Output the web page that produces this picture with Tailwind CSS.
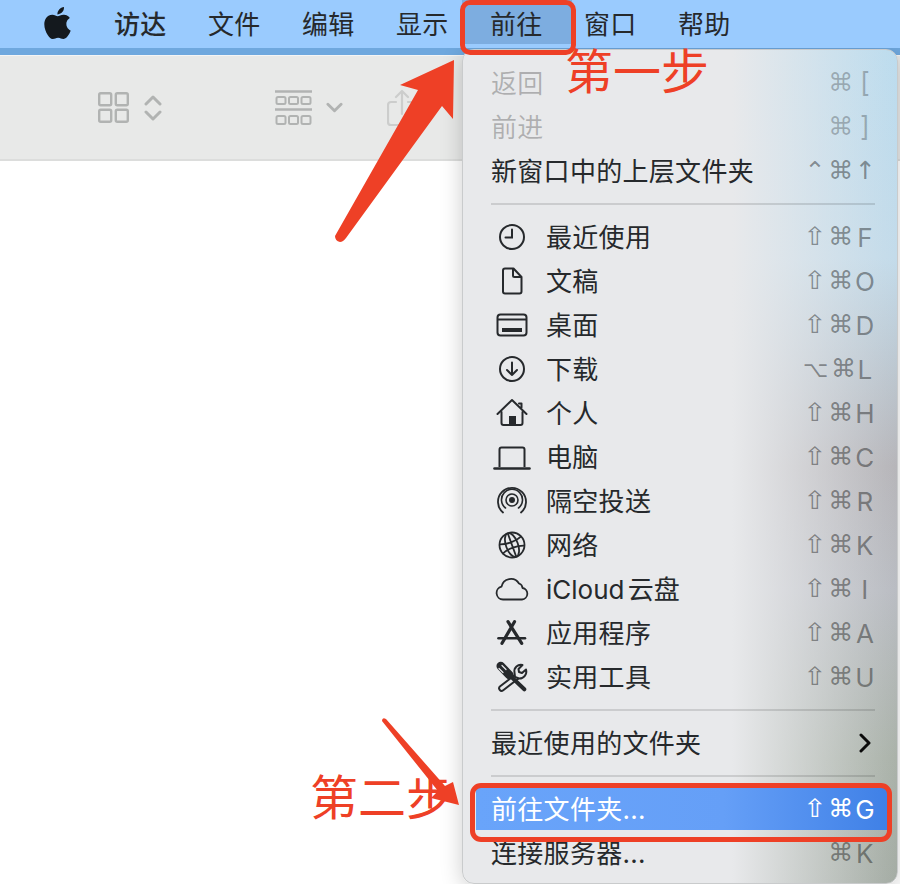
<!DOCTYPE html>
<html lang="zh-CN">
<head>
    <meta charset="UTF-8">
    <meta name="viewport" content="width=device-width, initial-scale=1.0">
    <title>前往文件夹</title>
    <script src="https://cdn.jsdelivr.net/npm/@tailwindcss/browser@4"></script>
</head>
<body class="bg-white">
<div class="relative w-[900px] h-[884px] overflow-hidden bg-white font-['Inter','Noto_Sans_CJK_SC',sans-serif] text-[26px] tracking-[0.3px] text-[#26292c]">

    <!-- 菜单栏 -->
    <header class="relative z-10 h-[48px] bg-[#9acbfe] flex items-center pl-[44px]">
        <svg class="w-[27px] h-[32px] mr-[43px] -mt-[2px] text-[#14191e]" viewBox="2 0 20 24" preserveAspectRatio="none" fill="currentColor"><path d="M12.152 6.896c-.948 0-2.415-1.078-3.96-1.04-2.04.027-3.91 1.183-4.961 3.014-2.117 3.675-.546 9.103 1.519 12.09 1.013 1.454 2.208 3.09 3.792 3.039 1.52-.065 2.09-.987 3.935-.987 1.831 0 2.35.987 3.96.948 1.637-.026 2.676-1.48 3.676-2.948 1.156-1.688 1.636-3.325 1.662-3.415-.039-.013-3.182-1.221-3.22-4.857-.026-3.04 2.48-4.494 2.597-4.559-1.429-2.09-3.623-2.324-4.39-2.376-2-.156-3.675 1.09-4.61 1.09zM15.53 3.83c.843-1.012 1.4-2.427 1.245-3.83-1.207.052-2.662.805-3.532 1.818-.78.896-1.454 2.338-1.273 3.714 1.338.104 2.715-.688 3.559-1.701"/></svg>
        <span class="w-[94px] font-medium">访达</span>
        <span class="w-[94px]">文件</span>
        <span class="w-[94px]">编辑</span>
        <span class="w-[94px]">显示</span>
        <span class="relative w-[94px]">
            <span class="absolute -left-[28px] top-[-9px] w-[110px] h-[48px] bg-[#7dade0]"></span>
            <span class="relative">前往</span>
        </span>
        <span class="w-[94px]">窗口</span>
        <span class="w-[94px]">帮助</span>
    </header>
    <div class="h-[7px] bg-[#6fa8de]"></div>
    <div class="h-[1px] bg-[#f4f5f5]"></div>

    <!-- 工具栏 -->
    <div class="h-[105px] bg-[#e8e9e8] border-b-2 border-[#dcdddc] flex items-center pl-[98px] text-[#b1b3b2]">
        <svg class="w-[31px] h-[31px] mr-[15px]" viewBox="0 0 31 31" fill="none" stroke="currentColor" stroke-width="2.4">
            <rect x="1.2" y="1.2" width="12" height="12" rx="1.5"/><rect x="17.8" y="1.2" width="12" height="12" rx="1.5"/>
            <rect x="1.2" y="17.8" width="12" height="12" rx="1.5"/><rect x="17.8" y="17.8" width="12" height="12" rx="1.5"/>
        </svg>
        <svg class="w-[18px] h-[28px] mr-[113px]" viewBox="0 0 18 28" fill="none" stroke="currentColor" stroke-width="3" stroke-linecap="round" stroke-linejoin="round">
            <path d="M2 10l7-7 7 7M2 18l7 7 7-7"/>
        </svg>
        <svg class="w-[37px] h-[36px] mr-[14px]" viewBox="0 0 37 36" fill="none" stroke="currentColor" stroke-width="2">
            <path d="M0 1.5h37M0 19.5h37" stroke-width="2.4"/>
            <rect x="1.5" y="7" width="9" height="7" rx="1.5"/><rect x="14" y="7" width="9" height="7" rx="1.5"/><rect x="26.500" y="7" width="9" height="7" rx="1.5"/>
            <rect x="1.5" y="26" width="9" height="8" rx="1.5"/><rect x="14" y="26" width="9" height="8" rx="1.5"/><rect x="26.500" y="26" width="9" height="8" rx="1.5"/>
        </svg>
        <svg class="w-[17px] h-[12px] mr-[44px]" viewBox="0 0 18 12" fill="none" stroke="currentColor" stroke-width="3" stroke-linecap="round" stroke-linejoin="round">
            <path d="M2 2l7 7 7-7"/>
        </svg>
        <svg class="w-[30px] h-[38px] opacity-50" viewBox="0 0 30 38" fill="none" stroke="currentColor" stroke-width="2.2" stroke-linecap="round" stroke-linejoin="round">
            <path d="M9 13H4a3 3 0 0 0-3 3v17a3 3 0 0 0 3 3h22a3 3 0 0 0 3-3V16a3 3 0 0 0-3-3h-5M15 25V2M9 8l6-6 6 6"/>
        </svg>
    </div>

    <!-- 下拉菜单 -->
    <div class="absolute left-[462px] top-[49px] w-[436px] h-[835px] pt-[11px] pl-[28px] pr-[22px] rounded-[12px] border border-[#c9cbcc] bg-[linear-gradient(90deg,#e8e9eb_62%,rgba(232,233,235,0)_100%),linear-gradient(180deg,#bcdcee_0%,#c3dbea_25%,#b6b5b9_50%,#b9bcc2_65%,#aab2a9_85%,#a4aca4_100%)] shadow-[0_4px_22px_rgba(0,0,0,0.2)]">
        <div class="h-[44px] flex items-center justify-between text-black/25">
            <span>返回</span>
            <span class="flex items-center font-['DejaVu_Sans'] text-[25px]"><span class="w-[28px] text-center">⌘</span><span class="w-[20px] text-center font-['Inter'] text-[27px]">[</span></span>
        </div>
        <div class="h-[44px] flex items-center justify-between text-black/25">
            <span>前进</span>
            <span class="flex items-center font-['DejaVu_Sans'] text-[25px]"><span class="w-[28px] text-center">⌘</span><span class="w-[20px] text-center font-['Inter'] text-[27px]">]</span></span>
        </div>
        <div class="h-[44px] flex items-center justify-between">
            <span>新窗口中的上层文件夹</span>
            <span class="flex items-center font-['DejaVu_Sans'] text-[25px] text-black/40"><span class="w-[24px] text-center">⌃</span><span class="w-[28px] text-center">⌘</span><span class="w-[20px] text-center">↑</span></span>
        </div>
        <div class="h-[22px] flex items-center"><div class="w-full h-[2px] bg-black/12"></div></div>

        <div class="h-[44px] flex items-center">
            <svg class="w-[42px] h-[32px] mr-[13px]" viewBox="0 0 42 32" fill="none" stroke="#26292c" stroke-width="2" stroke-linecap="round"><circle cx="21" cy="16" r="12"/><path d="M21 8.500v8h-6.500"/></svg>
            <span class="flex-1">最近使用</span>
            <span class="flex items-center font-['DejaVu_Sans'] text-[25px] text-black/40"><span class="w-[24px] text-center scale-x-[1.15]">⇧</span><span class="w-[28px] text-center">⌘</span><span class="w-[20px] text-center font-['Inter'] text-[26px]">F</span></span>
        </div>
        <div class="h-[44px] flex items-center">
            <svg class="w-[42px] h-[32px] mr-[13px]" viewBox="0 0 42 32" fill="none" stroke="#26292c" stroke-width="2" stroke-linejoin="round"><path d="M14 3.500h8.500l8 8.500v14.500a2 2 0 0 1-2 2H14a2 2 0 0 1-2-2V5.500a2 2 0 0 1 2-2z"/><path d="M22 4v6.500a1.500 1.500 0 0 0 1.500 1.500H30"/></svg>
            <span class="flex-1">文稿</span>
            <span class="flex items-center font-['DejaVu_Sans'] text-[25px] text-black/40"><span class="w-[24px] text-center scale-x-[1.15]">⇧</span><span class="w-[28px] text-center">⌘</span><span class="w-[20px] text-center font-['Inter'] text-[26px]">O</span></span>
        </div>
        <div class="h-[44px] flex items-center">
            <svg class="w-[42px] h-[32px] mr-[13px]" viewBox="0 0 42 32" fill="none" stroke="#26292c" stroke-width="2"><rect x="6.500" y="5.500" width="29" height="21" rx="3"/><path d="M7 10.500h28"/><rect x="11" y="19" width="20" height="4" fill="#26292c" stroke="none"/></svg>
            <span class="flex-1">桌面</span>
            <span class="flex items-center font-['DejaVu_Sans'] text-[25px] text-black/40"><span class="w-[24px] text-center scale-x-[1.15]">⇧</span><span class="w-[28px] text-center">⌘</span><span class="w-[20px] text-center font-['Inter'] text-[26px]">D</span></span>
        </div>
        <div class="h-[44px] flex items-center">
            <svg class="w-[42px] h-[32px] mr-[13px]" viewBox="0 0 42 32" fill="none" stroke="#26292c" stroke-width="2" stroke-linecap="round" stroke-linejoin="round"><circle cx="21" cy="16" r="12"/><path d="M21 9.500v12.500M16 17l5 5 5-5"/></svg>
            <span class="flex-1">下载</span>
            <span class="flex items-center font-['DejaVu_Sans'] text-[25px] text-black/40"><span class="w-[24px] mr-[4px] text-[22px] text-center">⌥</span><span class="w-[24px] text-center">⌘</span><span class="w-[20px] text-center font-['Inter'] text-[26px]">L</span></span>
        </div>
        <div class="h-[44px] flex items-center">
            <svg class="w-[42px] h-[32px] mr-[13px]" viewBox="0 0 42 32" fill="none" stroke="#26292c" stroke-width="2" stroke-linecap="round" stroke-linejoin="round"><path d="M6.500 17L21 3l14.500 14M28 6.500h2.500v4"/><path d="M10.500 15v11a2 2 0 0 0 2 2h17a2 2 0 0 0 2-2V15"/><rect x="18" y="19" width="7" height="9" fill="#26292c" stroke="none"/></svg>
            <span class="flex-1">个人</span>
            <span class="flex items-center font-['DejaVu_Sans'] text-[25px] text-black/40"><span class="w-[24px] text-center scale-x-[1.15]">⇧</span><span class="w-[28px] text-center">⌘</span><span class="w-[20px] text-center font-['Inter'] text-[26px]">H</span></span>
        </div>
        <div class="h-[44px] flex items-center">
            <svg class="w-[42px] h-[32px] mr-[13px]" viewBox="0 0 42 32" fill="none" stroke="#26292c" stroke-width="2"><path d="M8.500 26V8.500a2 2 0 0 1 2-2h21a2 2 0 0 1 2 2V26"/><path d="M3.500 27.500h35" stroke-width="2.600" stroke-linecap="round"/></svg>
            <span class="flex-1">电脑</span>
            <span class="flex items-center font-['DejaVu_Sans'] text-[25px] text-black/40"><span class="w-[24px] text-center scale-x-[1.15]">⇧</span><span class="w-[28px] text-center">⌘</span><span class="w-[20px] text-center font-['Inter'] text-[26px]">C</span></span>
        </div>
        <div class="h-[44px] flex items-center">
            <svg class="w-[42px] h-[32px] mr-[13px]" viewBox="0 0 42 32" fill="none" stroke="#26292c" stroke-width="1.600" stroke-linecap="round"><circle cx="21" cy="15" r="2.200" fill="#26292c"/><circle cx="21" cy="15" r="6"/><path d="M14.500 23a10.500 10.500 0 1 1 13 0"/><path d="M12 27.500a14 14 0 1 1 18 0" stroke-width="1.800"/></svg>
            <span class="flex-1">隔空投送</span>
            <span class="flex items-center font-['DejaVu_Sans'] text-[25px] text-black/40"><span class="w-[24px] text-center scale-x-[1.15]">⇧</span><span class="w-[28px] text-center">⌘</span><span class="w-[20px] text-center font-['Inter'] text-[26px]">R</span></span>
        </div>
        <div class="h-[44px] flex items-center">
            <svg class="w-[42px] h-[32px] mr-[13px]" viewBox="0 0 42 32" fill="none" stroke="#26292c" stroke-width="1.800"><circle cx="21" cy="16" r="12.500"/><g transform="rotate(-20 21 16)"><ellipse cx="21" cy="16" rx="6" ry="12.500"/><path d="M21 3.500v25M9 11c7 3 17 3 24 0M9 21c7-3 17-3 24 0"/></g></svg>
            <span class="flex-1">网络</span>
            <span class="flex items-center font-['DejaVu_Sans'] text-[25px] text-black/40"><span class="w-[24px] text-center scale-x-[1.15]">⇧</span><span class="w-[28px] text-center">⌘</span><span class="w-[20px] text-center font-['Inter'] text-[26px]">K</span></span>
        </div>
        <div class="h-[44px] flex items-center">
            <svg class="w-[42px] h-[32px] mr-[13px]" viewBox="0 0 42 32" fill="none" stroke="#26292c" stroke-width="1.800" stroke-linejoin="round"><path d="M12 26.500a6.500 6.500 0 0 1-1.500-12.800A9.500 9.500 0 0 1 28 10.500a5 5 0 0 1 3.500 4.500A5.800 5.800 0 0 1 31 26.500z"/></svg>
            <span class="flex-1 tracking-normal [word-spacing:-4px]">iCloud 云盘</span>
            <span class="flex items-center font-['DejaVu_Sans'] text-[25px] text-black/40"><span class="w-[24px] text-center scale-x-[1.15]">⇧</span><span class="w-[28px] text-center">⌘</span><span class="w-[20px] text-center font-['Inter'] text-[26px]">I</span></span>
        </div>
        <div class="h-[44px] flex items-center">
            <svg class="w-[42px] h-[32px] mr-[13px]" viewBox="0 0 42 32" fill="none" stroke="#26292c" stroke-linecap="round"><path d="M23.500 4.700L11 26.300M17 4.700L30.700 26.300" stroke-width="3.200"/><path d="M7.500 21.300h26.500" stroke-width="2.600"/></svg>
            <span class="flex-1">应用程序</span>
            <span class="flex items-center font-['DejaVu_Sans'] text-[25px] text-black/40"><span class="w-[24px] text-center scale-x-[1.15]">⇧</span><span class="w-[28px] text-center">⌘</span><span class="w-[20px] text-center font-['Inter'] text-[26px]">A</span></span>
        </div>
        <div class="h-[44px] flex items-center">
            <svg class="w-[42px] h-[32px] mr-[13px]" viewBox="0 0 42 32" fill="none" stroke-linecap="round" stroke-linejoin="round">
                <!-- 扳手 -->
                <path d="M25.700 15.700L10.700 27.300" stroke="#26292c" stroke-width="7"/>
                <path d="M25.700 15.700L10.700 27.300" stroke="#e8e9eb" stroke-width="3"/>
                <path d="M24 16l-.5-4.500a6.500 6.500 0 0 1 8-7.500l-4 4 .5 3 3 1 4-3.500a7 7 0 0 1-7 9z" fill="#e8e9eb" stroke="#26292c" stroke-width="2"/>
                <!-- 螺丝刀 -->
                <path d="M18.300 14L33.300 28.300" stroke="#26292c" stroke-width="4"/>
                <path d="M9.700 5L18.300 14" stroke="#26292c" stroke-width="8.500"/>
                <path d="M8 7.500l4 4M11 4.500l4 4" stroke="#e8e9eb" stroke-width="1.200"/>
            </svg>
            <span class="flex-1">实用工具</span>
            <span class="flex items-center font-['DejaVu_Sans'] text-[25px] text-black/40"><span class="w-[24px] text-center scale-x-[1.15]">⇧</span><span class="w-[28px] text-center">⌘</span><span class="w-[20px] text-center font-['Inter'] text-[26px]">U</span></span>
        </div>

        <div class="h-[22px] flex items-center"><div class="w-full h-[2px] bg-black/12"></div></div>
        <div class="h-[44px] flex items-center justify-between">
            <span>最近使用的文件夹</span>
            <svg class="w-[16px] h-[20px] mr-[2px]" viewBox="0 0 16 20" fill="none" stroke="#0b0b0b" stroke-width="3" stroke-linecap="round" stroke-linejoin="round"><path d="M4 2l8 8-8 8"/></svg>
        </div>
        <div class="h-[22px] flex items-center"><div class="w-full h-[2px] bg-black/12"></div></div>

        <div class="relative h-[44px] flex items-center justify-between text-white">
            <div class="absolute -left-[15px] -right-[14px] top-[1px] h-[42px] bg-[linear-gradient(90deg,#69a4fa_0%,#659ff7_60%,#3f80e6_100%)]"></div>
            <span class="relative">前往文件夹...</span>
            <span class="relative flex items-center font-['DejaVu_Sans'] text-[25px]"><span class="w-[24px] text-center scale-x-[1.15]">⇧</span><span class="w-[28px] text-center">⌘</span><span class="w-[20px] text-center font-['Inter'] text-[26px]">G</span></span>
        </div>
        <div class="h-[44px] flex items-center justify-between">
            <span>连接服务器...</span>
            <span class="flex items-center font-['DejaVu_Sans'] text-[25px] text-black/40"><span class="w-[28px] text-center">⌘</span><span class="w-[20px] text-center font-['Inter'] text-[26px]">K</span></span>
        </div>
    </div>

    <!-- 标注 -->
    <div class="absolute z-20 left-[460px] top-[0px] w-[116px] h-[55px] rounded-[10px] border-[5px] border-[#ee4026]"></div>
    <div class="absolute left-[470px] top-[783px] w-[422px] h-[59px] rounded-[11px] border-[5px] border-[#ee4026]"></div>
    <span class="absolute left-[565px] top-[40px] text-[48px] tracking-normal leading-[64px] font-normal text-[#ee4026]">第一步</span>
    <span class="absolute left-[310px] top-[766px] text-[48px] tracking-normal leading-[64px] font-normal text-[#ee4026]">第二步</span>
    <svg class="absolute left-0 top-0 w-[900px] h-[884px] pointer-events-none" viewBox="0 0 900 884" fill="#ee4026">
        <path d="M454 60L400 85L418 90L335 236Q335 241 340 242Q343 242 346 238L442 106L453 119Z"/>
        <path d="M382 721Q382 717 386 719L445 786L453 782L459 805L431 798L438 791Z"/>
    </svg>
</div>
</body>
</html>
